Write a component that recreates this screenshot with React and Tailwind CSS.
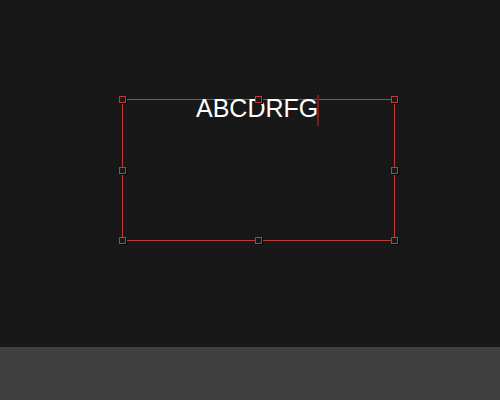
export default function App() {
  const handles = [
    "left-[-4px] top-[-4px]",
    "left-[132px] top-[-4px]",
    "left-[268px] top-[-4px]",
    "left-[-4px] top-[67px]",
    "left-[268px] top-[67px]",
    "left-[-4px] top-[137px]",
    "left-[132px] top-[137px]",
    "left-[268px] top-[137px]",
  ];
  return (
    <div className="w-[500px] h-[400px] flex flex-col bg-[#181818] overflow-hidden" style={{ fontFamily: '"Liberation Sans", Arial, sans-serif' }}>
      <div className="h-[347px] pt-[99px] pl-[122px]">
        <div className="relative w-[273px] h-[142px] border border-[#c3383a]">
          <div className="absolute left-[73px] top-[-4px] text-[25px] leading-[25px] text-white whitespace-nowrap">ABCDRFG</div>
          <div className="absolute left-[194px] top-[-5px] w-[2px] h-[31px] bg-[#7a1c1e]" />
          {handles.map((h, i) => (
            <div key={i} className={`absolute ${h} w-[7px] h-[7px] border border-[#c3383a] bg-[#181818] shadow-[1px_1px_0_#000]`} />
          ))}
        </div>
      </div>
      <div className="flex-1 bg-[#404040]" />
    </div>
  );
}
